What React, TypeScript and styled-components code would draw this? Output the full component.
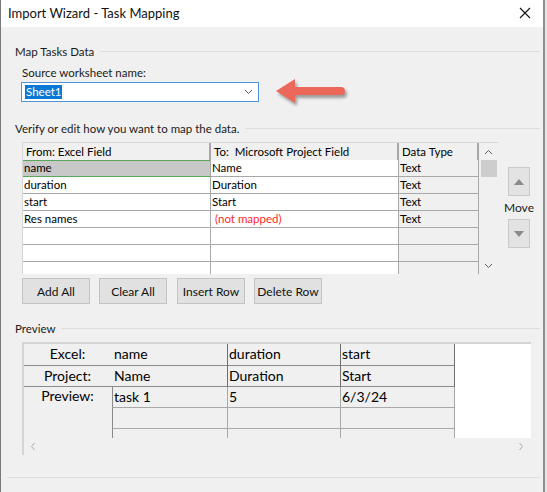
import React from 'react';
import styled, { createGlobalStyle } from 'styled-components';

const GlobalStyle = createGlobalStyle`
  html, body {
    margin: 0;
    padding: 0;
    background: #e6e6e6;
  }
  body {
    font-family: Lato, "Noto Sans", sans-serif;
    color: #000;
  }
  * { box-sizing: border-box; }
`;

type MapRow = {
  from?: string;
  to?: string;
  type?: string;
  selected?: boolean;
  unmapped?: boolean;
};

const mapRows: MapRow[] = [
  { from: 'name', to: 'Name', type: 'Text', selected: true },
  { from: 'duration', to: 'Duration', type: 'Text' },
  { from: 'start', to: 'Start', type: 'Text' },
  { from: 'Res names', to: '(not mapped)', type: 'Text', unmapped: true },
  {},
  {},
  {},
];

const previewCols = [
  { excel: 'name', project: 'Name', value: 'task 1' },
  { excel: 'duration', project: 'Duration', value: '5' },
  { excel: 'start', project: 'Start', value: '6/3/24' },
];

const App: React.FC = () => {
  return (
    <>
      <GlobalStyle />
      <Window>
        <TitleBar>
          <span>Import Wizard - Task Mapping</span>
          <svg width="12" height="12" viewBox="0 0 12 12">
            <path d="M1 1 L11 11 M11 1 L1 11" stroke="#111" strokeWidth="1.1" />
          </svg>
        </TitleBar>

        <Content>
          <GroupHeader>Map Tasks Data</GroupHeader>
          <Inset>
            <FieldLabel>Source worksheet name:</FieldLabel>
            <ComboRow>
              <Combo>
                <Selected>Sheet1</Selected>
                <svg width="9" height="6" viewBox="0 0 9 6">
                  <path d="M1 1 L4.5 4.5 L8 1" stroke="#555" strokeWidth="1" fill="none" />
                </svg>
              </Combo>
              <svg width="80" height="30" viewBox="0 0 80 30">
                <defs>
                  <filter id="sh" x="-20%" y="-40%" width="140%" height="180%">
                    <feGaussianBlur stdDeviation="1.4" />
                  </filter>
                </defs>
                <path
                  d="M3 17 L22 5 L22 13 L68 13 Q72 13 72 17 Q72 21 68 21 L22 21 L22 29 Z"
                  fill="rgba(0,0,0,0.35)"
                  filter="url(#sh)"
                />
                <path
                  d="M1 14 L20 2 L20 10 L66 10 Q70 10 70 14 Q70 18 66 18 L20 18 L20 26 Z"
                  fill="#ec685b"
                />
              </svg>
            </ComboRow>
          </Inset>

          <GroupHeader $top={14}>Verify or edit how you want to map the data.</GroupHeader>
          <Inset>
            <MappingRow>
              <Grid>
                <GridBody>
                  <HeaderRow>
                    <HeaderCell>From: Excel Field</HeaderCell>
                    <HeaderCell>To:&nbsp; Microsoft Project Field</HeaderCell>
                    <HeaderCell>Data Type</HeaderCell>
                  </HeaderRow>
                  {mapRows.map((r, i) => (
                    <DataRow key={i}>
                      <Cell $selected={r.selected}>{r.from}</Cell>
                      <Cell $unmapped={r.unmapped}>{r.to}</Cell>
                      <Cell $readonly>{r.type}</Cell>
                    </DataRow>
                  ))}
                </GridBody>
                <VScroll>
                  <ScrollArrow>
                    <svg width="9" height="6" viewBox="0 0 9 6">
                      <path d="M1 5 L4.5 1.5 L8 5" stroke="#606060" strokeWidth="1" fill="none" />
                    </svg>
                  </ScrollArrow>
                  <Thumb />
                  <ScrollSpacer />
                  <ScrollArrow>
                    <svg width="9" height="6" viewBox="0 0 9 6">
                      <path d="M1 1 L4.5 4.5 L8 1" stroke="#606060" strokeWidth="1" fill="none" />
                    </svg>
                  </ScrollArrow>
                </VScroll>
              </Grid>
              <MoveColumn>
                <MoveButton>
                  <svg width="10" height="6" viewBox="0 0 10 6">
                    <path d="M0 6 L5 0 L10 6 Z" fill="#8a8a8a" />
                  </svg>
                </MoveButton>
                <MoveLabel>Move</MoveLabel>
                <MoveButton>
                  <svg width="10" height="6" viewBox="0 0 10 6">
                    <path d="M0 0 L10 0 L5 6 Z" fill="#8a8a8a" />
                  </svg>
                </MoveButton>
              </MoveColumn>
            </MappingRow>

            <ButtonRow>
              <Button>Add All</Button>
              <Button>Clear All</Button>
              <Button $ml={10}>Insert Row</Button>
              <Button>Delete Row</Button>
            </ButtonRow>
          </Inset>

          <GroupHeader $top={17}>Preview</GroupHeader>
          <Inset>
            <PreviewBox>
              <PreviewGrid>
                <RowLabel>Excel:</RowLabel>
                {previewCols.map((c) => (
                  <PCell key={'e' + c.excel} $head $first={c.excel === 'name'}>
                    {c.excel}
                  </PCell>
                ))}
                <Filler />
                <RowLabel>Project:</RowLabel>
                {previewCols.map((c) => (
                  <PCell key={'p' + c.project} $head $first={c.project === 'Name'}>
                    {c.project}
                  </PCell>
                ))}
                <PreviewLabel>Preview:</PreviewLabel>
                {previewCols.map((c) => (
                  <PCell key={'v' + c.value} $first={c.value === 'task 1'}>
                    {c.value}
                  </PCell>
                ))}
                {previewCols.map((c) => (
                  <PCell key={'b1' + c.value} $first={c.value === 'task 1'} />
                ))}
                {previewCols.map((c) => (
                  <PCell key={'b2' + c.value} $first={c.value === 'task 1'} />
                ))}
              </PreviewGrid>
              <HScroll>
                <svg width="6" height="9" viewBox="0 0 6 9">
                  <path d="M4.5 1 L1.5 4.5 L4.5 8" stroke="#a8a8a8" strokeWidth="1" fill="none" />
                </svg>
                <svg width="6" height="9" viewBox="0 0 6 9">
                  <path d="M1.5 1 L4.5 4.5 L1.5 8" stroke="#a8a8a8" strokeWidth="1" fill="none" />
                </svg>
              </HScroll>
            </PreviewBox>
          </Inset>

          <BottomRule />
        </Content>
      </Window>
    </>
  );
};

const Window = styled.div`
  width: 545px;
  height: 492px;
  display: flex;
  flex-direction: column;
  background: #f0f0f0;
  border-left: 1px solid #7a7a7a;
  border-right: 2px solid #8e8e8e;
  overflow: hidden;
`;

const TitleBar = styled.div`
  height: 27px;
  flex: none;
  display: flex;
  align-items: center;
  justify-content: space-between;
  padding: 0 12px 1px 7px;
  background: #ffffff;
  font-size: 13px;
  color: #111;
`;

const Content = styled.div`
  display: flex;
  flex-direction: column;
  padding: 0 3px 0 14px;
`;

const GroupHeader = styled.div<{ $top?: number }>`
  display: flex;
  align-items: center;
  gap: 6px;
  height: 14px;
  margin-top: ${(p) => p.$top ?? 17}px;
  font-size: 11.5px;
  color: #1a1a1a;
  white-space: nowrap;

  &::after {
    content: '';
    flex: 1;
    border-top: 1px solid #dddddd;
  }
`;

const Inset = styled.div`
  display: flex;
  flex-direction: column;
  padding-left: 7px;
`;

const FieldLabel = styled.div`
  margin-top: 8px;
  height: 14px;
  line-height: 14px;
  font-size: 11.5px;
  color: #1a1a1a;
`;

const ComboRow = styled.div`
  display: flex;
  align-items: center;
  gap: 16px;
  margin-top: -3px;
  margin-left: -1px;
`;

const Combo = styled.div`
  width: 238px;
  height: 20px;
  display: flex;
  align-items: center;
  justify-content: space-between;
  padding: 0 5px 0 3px;
  background: #ffffff;
  border: 1px solid #4c95dd;
`;

const Selected = styled.span`
  background: #0a78d6;
  color: #ffffff;
  font-size: 11.5px;
  line-height: 14px;
  padding: 0 1px;
`;

const MappingRow = styled.div`
  display: flex;
  align-items: flex-start;
  margin-top: 7px;
`;

const Grid = styled.div`
  width: 476px;
  height: 132px;
  display: flex;
  border-top: 1px solid #d6d6d6;
  border-left: 1px solid #d6d6d6;
  background: #f0f0f0;
  overflow: hidden;
`;

const GridBody = styled.div`
  width: 456px;
  display: flex;
  flex-direction: column;
`;

const columns = `188px 188px 80px`;

const HeaderRow = styled.div`
  display: grid;
  grid-template-columns: ${columns};
  height: 17px;
  flex: none;
`;

const HeaderCell = styled.div`
  padding-left: 3px;
  font-size: 11.5px;
  line-height: 17px;
  background: #f0f0f0;
  border-right: 2px solid #a8a8a8;
  white-space: nowrap;
  overflow: hidden;
`;

const DataRow = styled.div`
  display: grid;
  grid-template-columns: ${columns};
  height: 17px;
  flex: none;
`;

const Cell = styled.div<{ $selected?: boolean; $unmapped?: boolean; $readonly?: boolean }>`
  padding-left: ${(p) => (p.$unmapped ? 4 : 1)}px;
  font-size: 11.5px;
  line-height: 16px;
  white-space: nowrap;
  overflow: hidden;
  color: ${(p) => (p.$unmapped ? '#ff2a2a' : '#000')};
  background: ${(p) => (p.$selected ? '#c8c8c8' : p.$readonly ? '#f0f0f0' : '#ffffff')};
  border-right: 1px solid #a8a8a8;
  border-bottom: 1px solid ${(p) => (p.$selected ? '#5aa65a' : '#a8a8a8')};
  box-shadow: ${(p) => (p.$selected ? 'inset 0 1px 0 #5aa65a' : 'none')};
`;

const VScroll = styled.div`
  width: 19px;
  display: flex;
  flex-direction: column;
  align-items: center;
  background: #f0f0f0;
`;

const ScrollArrow = styled.div`
  height: 17px;
  display: flex;
  align-items: center;
  justify-content: center;
`;

const Thumb = styled.div`
  width: 16px;
  height: 17px;
  background: #cdcdcd;
`;

const ScrollSpacer = styled.div`
  flex: 1;
`;

const MoveColumn = styled.div`
  display: flex;
  flex-direction: column;
  align-items: center;
  margin-top: 25px;
  margin-left: 9px;
  width: 24px;
`;

const MoveButton = styled.div`
  width: 22px;
  height: 29px;
  display: flex;
  align-items: center;
  justify-content: center;
  background: #e3e3e3;
  border: 1px solid #cacaca;
`;

const MoveLabel = styled.div`
  height: 23px;
  line-height: 23px;
  font-size: 12px;
  color: #1a1a2a;
`;

const ButtonRow = styled.div`
  display: flex;
  margin-top: 4px;
`;

const Button = styled.div<{ $ml?: number }>`
  width: 68px;
  height: 26px;
  margin-left: ${(p) => p.$ml ?? 9}px;
  display: flex;
  align-items: center;
  justify-content: center;
  background: #e1e1e1;
  border: 1px solid #c4c4c4;
  font-size: 12px;
  color: #111;

  &:first-child {
    margin-left: 0;
  }
`;

const PreviewBox = styled.div`
  width: 509px;
  height: 113px;
  margin-top: 7px;
  display: flex;
  flex-direction: column;
  border-left: 2px solid #d4d4d4;
  background: #f0f0f0;
`;

const PreviewGrid = styled.div`
  display: grid;
  grid-template-columns: 89px 115px 113px 114px 1fr;
  grid-template-rows: 22px 21px 21px 21px 21px;
  height: 96px;
  overflow: hidden;
  border-top: 2px solid #d4d4d4;
`;

const RowLabel = styled.div`
  text-align: center;
  font-size: 14px;
  line-height: 20px;
  border-bottom: 1px solid #8a8a8a;
  padding-right: 2px;
`;

const PreviewLabel = styled.div`
  grid-row: 3 / 6;
  grid-column: 1;
  text-align: center;
  font-size: 14px;
  line-height: 18px;
  padding-right: 2px;
`;

const PCell = styled.div<{ $head?: boolean; $first?: boolean }>`
  font-size: 14px;
  line-height: 20px;
  padding-left: ${(p) => (p.$first && p.$head ? 2 : 1)}px;
  white-space: nowrap;
  border-right: 1px solid ${(p) => (p.$head ? '#6e6e6e' : '#a8a8a8')};
  border-bottom: 1px solid ${(p) => (p.$head ? '#8a8a8a' : '#a8a8a8')};
  border-left: ${(p) => (p.$first && !p.$head ? '1px solid #8a8a8a' : 'none')};
  margin-left: ${(p) => (p.$first ? -1 : 0)}px;
`;

const Filler = styled.div`
  grid-row: 1 / -1;
  grid-column: 5;
  background: #ffffff;
`;

const HScroll = styled.div`
  height: 17px;
  display: flex;
  align-items: center;
  justify-content: space-between;
  padding: 0 7px 0 6px;
  background: #f0f0f0;
`;

const BottomRule = styled.div`
  margin-top: 22px;
  margin-left: -8px;
  border-top: 1px solid #dddddd;
`;

export default App;
